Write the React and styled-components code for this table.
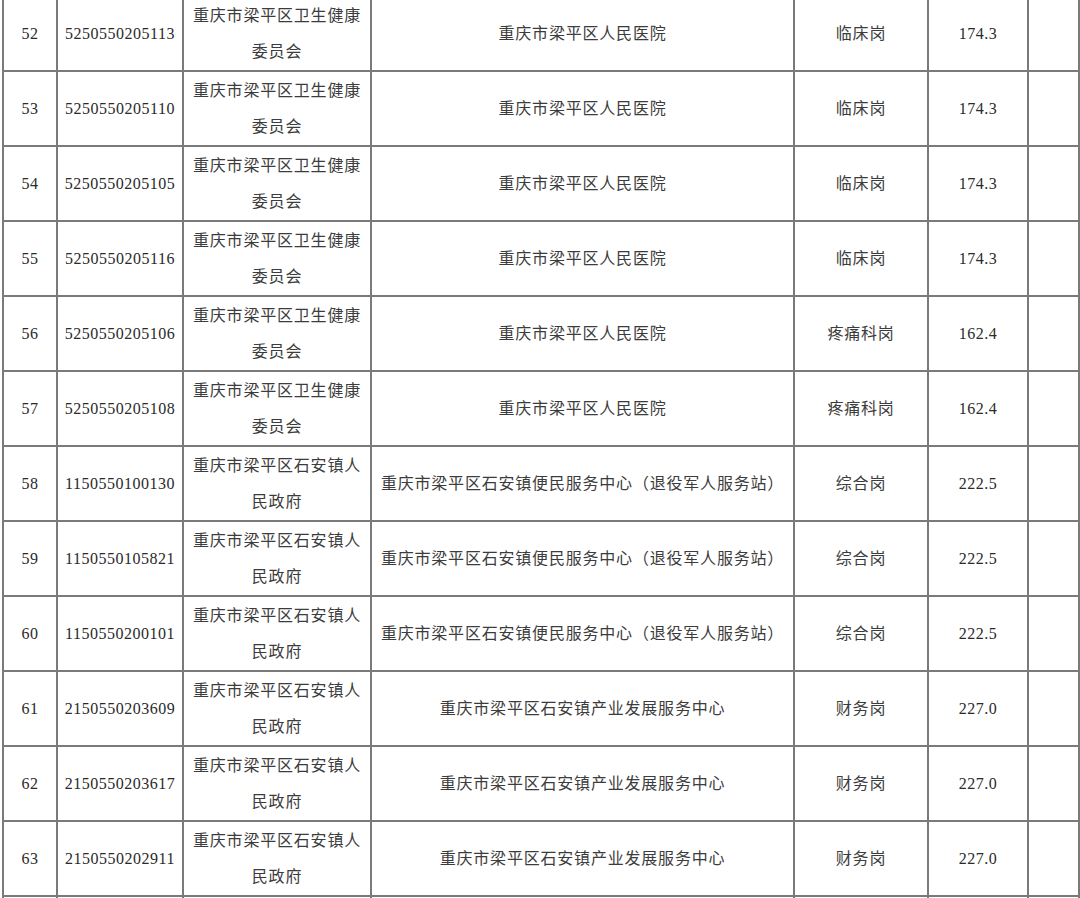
import React from "react";
import styled, { createGlobalStyle } from "styled-components";

const GlobalStyle = createGlobalStyle`
  html, body {
    margin: 0;
    padding: 0;
    background: #ffffff;
  }
`;

const Page = styled.div`
  width: 1080px;
  height: 898px;
  overflow: hidden;
  background: #fff;
  padding: 0 2px;
  box-sizing: border-box;
`;

const Table = styled.table`
  width: 1076px;
  margin-top: -5px;
  border-collapse: collapse;
  table-layout: fixed;
  font-family: "Liberation Serif", "Noto Sans CJK SC", serif;
  font-size: 16px;
  color: #3c3c3c;
`;

const Row = styled.tr`
  height: 75px;
`;

const Cell = styled.td`
  border: 2px solid #7a7a7a;
  border-right: ${(p) => (p.$dark ? "1px solid #111" : "2px solid #7a7a7a")};
  text-align: center;
  vertical-align: middle;
  padding: 1px ${(p) => (p.$pad ? p.$pad : 4)}px 0;
  line-height: 36px;
  letter-spacing: ${(p) => (p.$num ? "0.5px" : "0.8px")};
  color: ${(p) => (p.$num ? "#2a2a2a" : "#3c3c3c")};
  word-break: break-all;
`;

const widths = [54, 126, 188, 423, 134, 100, 51];

const rows = [
  ["52", "5250550205113", "重庆市梁平区卫生健康委员会", "重庆市梁平区人民医院", "临床岗", "174.3"],
  ["53", "5250550205110", "重庆市梁平区卫生健康委员会", "重庆市梁平区人民医院", "临床岗", "174.3"],
  ["54", "5250550205105", "重庆市梁平区卫生健康委员会", "重庆市梁平区人民医院", "临床岗", "174.3"],
  ["55", "5250550205116", "重庆市梁平区卫生健康委员会", "重庆市梁平区人民医院", "临床岗", "174.3"],
  ["56", "5250550205106", "重庆市梁平区卫生健康委员会", "重庆市梁平区人民医院", "疼痛科岗", "162.4"],
  ["57", "5250550205108", "重庆市梁平区卫生健康委员会", "重庆市梁平区人民医院", "疼痛科岗", "162.4"],
  ["58", "1150550100130", "重庆市梁平区石安镇人民政府", "重庆市梁平区石安镇便民服务中心（退役军人服务站）", "综合岗", "222.5"],
  ["59", "1150550105821", "重庆市梁平区石安镇人民政府", "重庆市梁平区石安镇便民服务中心（退役军人服务站）", "综合岗", "222.5"],
  ["60", "1150550200101", "重庆市梁平区石安镇人民政府", "重庆市梁平区石安镇便民服务中心（退役军人服务站）", "综合岗", "222.5"],
  ["61", "2150550203609", "重庆市梁平区石安镇人民政府", "重庆市梁平区石安镇产业发展服务中心", "财务岗", "227.0"],
  ["62", "2150550203617", "重庆市梁平区石安镇人民政府", "重庆市梁平区石安镇产业发展服务中心", "财务岗", "227.0"],
  ["63", "2150550202911", "重庆市梁平区石安镇人民政府", "重庆市梁平区石安镇产业发展服务中心", "财务岗", "227.0"],
  ["", "", "", "", "", ""],
];

export default function App() {
  return (
    <Page>
      <GlobalStyle />
      <Table>
        <colgroup>
          {widths.map((w, i) => (
            <col key={i} style={{ width: w }} />
          ))}
        </colgroup>
        <tbody>
          {rows.map((r, i) => (
            <Row key={i}>
              <Cell $num>{r[0]}</Cell>
              <Cell $num>{r[1]}</Cell>
              <Cell $pad={6}>{r[2]}</Cell>
              <Cell>{r[3]}</Cell>
              <Cell>{r[4]}</Cell>
              <Cell $num $dark>{r[5]}</Cell>
              <Cell />
            </Row>
          ))}
        </tbody>
      </Table>
    </Page>
  );
}
